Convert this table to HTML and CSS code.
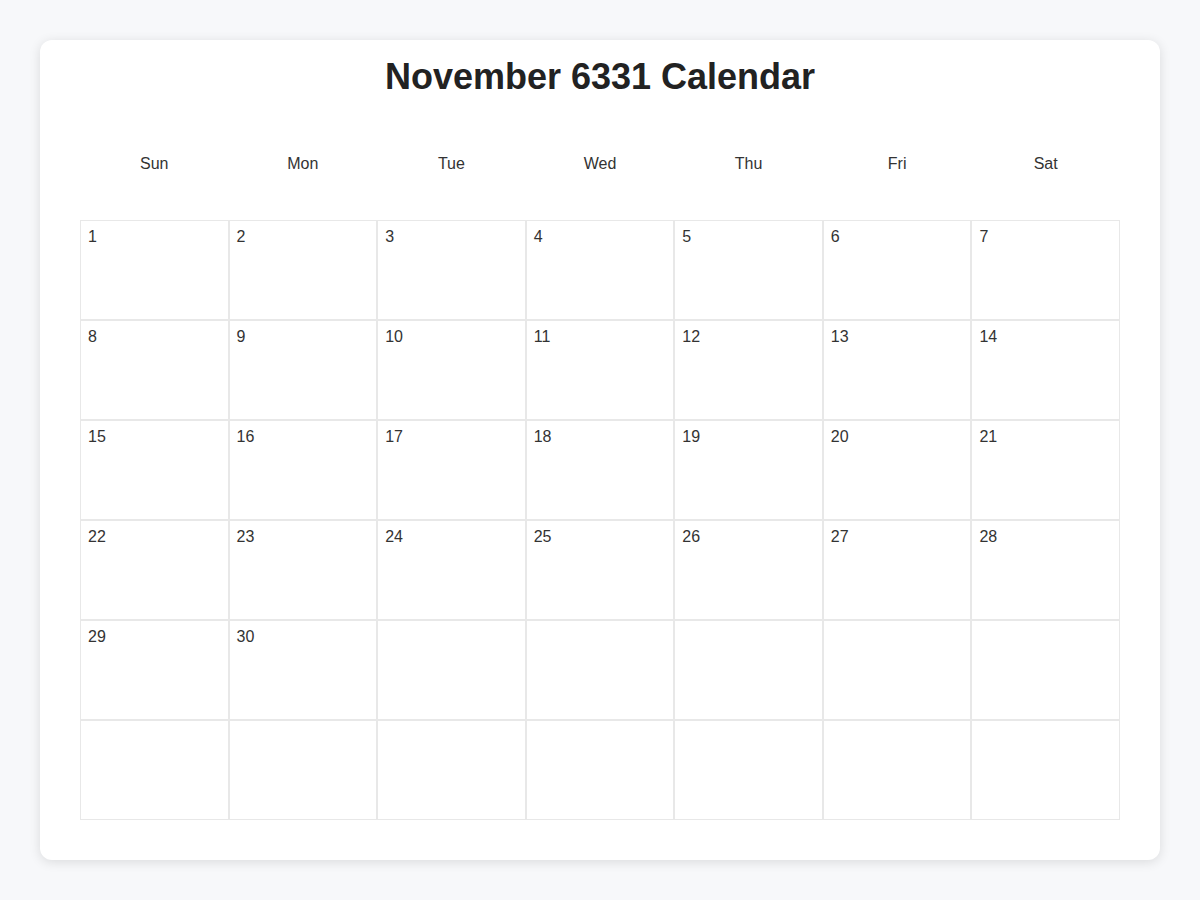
FILE: index.html
```html
<!DOCTYPE html>
<html lang="en">
<head>
<meta charset="utf-8">
<title>November 6331 Calendar</title>
<link rel="stylesheet" href="styles.css">
</head>
<body>
<div class="card">
  <h1 class="title">November 6331 Calendar</h1>
  <div class="weekdays">
    <div class="weekday">Sun</div>
    <div class="weekday">Mon</div>
    <div class="weekday">Tue</div>
    <div class="weekday">Wed</div>
    <div class="weekday">Thu</div>
    <div class="weekday">Fri</div>
    <div class="weekday">Sat</div>
  </div>
  <div class="days">
    <div class="day">1</div><div class="day">2</div><div class="day">3</div><div class="day">4</div><div class="day">5</div><div class="day">6</div><div class="day">7</div>
    <div class="day">8</div><div class="day">9</div><div class="day">10</div><div class="day">11</div><div class="day">12</div><div class="day">13</div><div class="day">14</div>
    <div class="day">15</div><div class="day">16</div><div class="day">17</div><div class="day">18</div><div class="day">19</div><div class="day">20</div><div class="day">21</div>
    <div class="day">22</div><div class="day">23</div><div class="day">24</div><div class="day">25</div><div class="day">26</div><div class="day">27</div><div class="day">28</div>
    <div class="day">29</div><div class="day">30</div><div class="day"></div><div class="day"></div><div class="day"></div><div class="day"></div><div class="day"></div>
    <div class="day"></div><div class="day"></div><div class="day"></div><div class="day"></div><div class="day"></div><div class="day"></div><div class="day"></div>
  </div>
</div>
</body>
</html>
```
FILE: styles.css
```css
html, body {
  margin: 0;
  padding: 0;
}
body {
  background: #f7f8fa;
  font-family: "Liberation Sans", Arial, sans-serif;
  color: #333;
  padding: 40px;
}
.card {
  background: #fff;
  border-radius: 12px;
  box-shadow: 0 2px 12px rgba(0, 0, 0, 0.12);
  padding: 16px 40px 40px;
}
.title {
  margin: 0 0 46px;
  font-size: 36px;
  line-height: 42px;
  font-weight: bold;
  text-align: center;
  color: #222;
}
.weekdays {
  display: grid;
  grid-template-columns: repeat(7, 1fr);
  margin-bottom: 36px;
}
.weekday {
  padding: 10px 0;
  line-height: 20px;
  font-size: 16px;
  text-align: center;
  color: #333;
}
.days {
  display: grid;
  grid-template-columns: repeat(7, 1fr);
  grid-auto-rows: 100px;
}
.day {
  border: 1px solid #e8e8e8;
  padding: 7px 7px 6px;
  font-size: 16px;
  line-height: 18px;
  color: #333;
}
```
